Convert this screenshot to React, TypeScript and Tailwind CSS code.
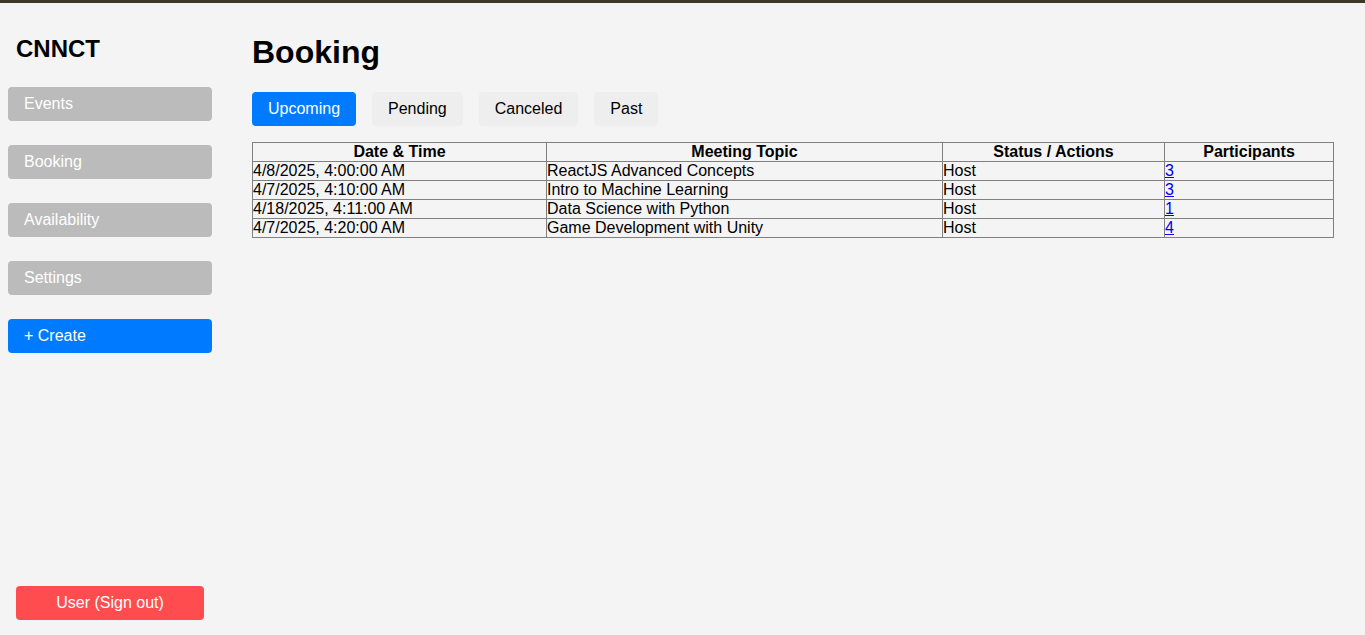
import React from 'react';

const rows = [
  { date: '4/8/2025, 4:00:00 AM', topic: 'ReactJS Advanced Concepts', status: 'Host', count: 3 },
  { date: '4/7/2025, 4:10:00 AM', topic: 'Intro to Machine Learning', status: 'Host', count: 3 },
  { date: '4/18/2025, 4:11:00 AM', topic: 'Data Science with Python', status: 'Host', count: 1 },
  { date: '4/7/2025, 4:20:00 AM', topic: 'Game Development with Unity', status: 'Host', count: 4 },
];

const nav = ['Events', 'Booking', 'Availability', 'Settings'];
const tabs = ['Upcoming', 'Pending', 'Canceled', 'Past'];

export default function App() {
  return (
    <div className="flex h-[635px] overflow-hidden border-t-[3px] border-[#3d3727] bg-[#f4f4f4] font-['Liberation_Sans',Arial,sans-serif] text-black">
      <aside className="flex w-[220px] shrink-0 flex-col px-2 pb-[15px]">
        <h2 className="mt-[32px] px-2 text-[24px] font-bold leading-[28px]">CNNCT</h2>
        <nav className="mt-6 flex flex-col gap-6">
          {nav.map((item) => (
            <button
              key={item}
              className="h-[34px] w-[204px] rounded bg-[#bbbbbb] pl-4 text-left text-base text-white"
            >
              {item}
            </button>
          ))}
          <button className="h-[34px] w-[204px] rounded bg-[#007bff] pl-4 text-left text-base text-white">
            + Create
          </button>
        </nav>
        <button className="mx-2 mt-auto h-[34px] w-[188px] rounded bg-[#ff4d4f] text-base text-white">
          User (Sign out)
        </button>
      </aside>

      <main className="flex-1 pl-8 pr-[31px]">
        <h1 className="mt-[31px] text-[32px] font-bold leading-[37px]">Booking</h1>
        <div className="mt-[21px] flex gap-4">
          {tabs.map((tab, i) => (
            <button
              key={tab}
              className={`h-[34px] rounded px-4 text-base ${
                i === 0 ? 'bg-[#007bff] text-white' : 'bg-[#eeeeee] text-black'
              }`}
            >
              {tab}
            </button>
          ))}
        </div>

        <table className="mt-4 w-full table-fixed border-collapse border border-[#808080] text-base leading-[18px]">
          <thead>
            <tr>
              <th className="w-[294px] border border-[#808080] text-center font-bold">Date &amp; Time</th>
              <th className="w-[396px] border border-[#808080] text-center font-bold">Meeting Topic</th>
              <th className="w-[222px] border border-[#808080] text-center font-bold">Status / Actions</th>
              <th className="border border-[#808080] text-center font-bold">Participants</th>
            </tr>
          </thead>
          <tbody>
            {rows.map((r) => (
              <tr key={r.date + r.topic}>
                <td className="border border-[#808080]">{r.date}</td>
                <td className="border border-[#808080]">{r.topic}</td>
                <td className="border border-[#808080]">{r.status}</td>
                <td className="border border-[#808080]">
                  <a href="#" className="text-[#0000ee] underline">
                    {r.count}
                  </a>
                </td>
              </tr>
            ))}
          </tbody>
        </table>
      </main>
    </div>
  );
}
